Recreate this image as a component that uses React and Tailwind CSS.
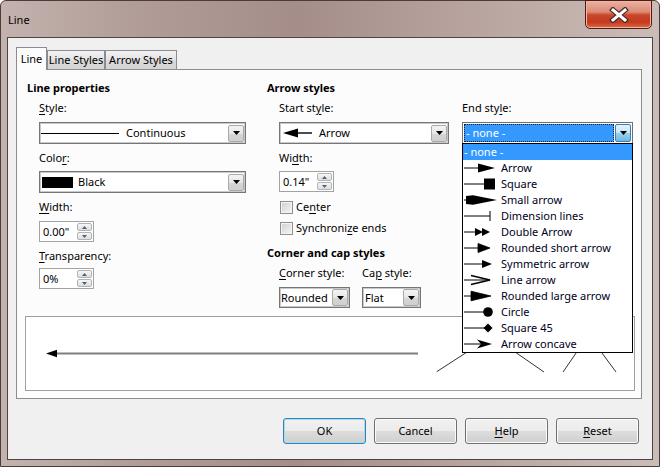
import React from 'react';

const Tri = () => (
  <svg width="7" height="4" viewBox="0 0 7 4" className="block">
    <path d="M0 0H7L3.5 4Z" fill="#000" />
  </svg>
);

function ComboBtn() {
  return (
    <div className="flex h-[17px] w-[16px] items-center justify-center rounded-[2px] border border-[#a9a9a9] bg-[linear-gradient(#f4f4f4,#e6e6e6_50%,#d6d6d6_51%,#cfcfcf)]">
      <Tri />
    </div>
  );
}

function Combo({ className, children }) {
  return (
    <div className={'flex items-center border border-[#767676] bg-white pr-[1px] shadow-[inset_0_0_0_1px_#c9c9c9] ' + className}>
      <div className="flex min-w-0 flex-1 items-center overflow-hidden">{children}</div>
      <ComboBtn />
    </div>
  );
}

function SpinBtn({ up }) {
  return (
    <div className="flex h-[8px] w-[15px] items-center justify-center rounded-[2px] border border-[#b3b3b3] bg-[linear-gradient(#f6f6f6,#dedede)]">
      <svg width="5" height="3" viewBox="0 0 5 3" className="block">
        <path d={up ? 'M0 3H5L2.5 0Z' : 'M0 0H5L2.5 3Z'} fill="#4d5e80" />
      </svg>
    </div>
  );
}

function Spin({ value, className }) {
  return (
    <div className={'flex h-[21px] w-[55px] items-center justify-between border border-[#a3a3a3] bg-white pl-[3px] pr-[1px] ' + className}>
      <span>{value}</span>
      <div className="flex flex-col gap-[1px]">
        <SpinBtn up />
        <SpinBtn />
      </div>
    </div>
  );
}

function Check({ children, className }) {
  return (
    <div className={'flex h-[16px] items-center pl-[1px] ' + className}>
      <div className="h-[13px] w-[13px] border border-[#8e8f8f] bg-[linear-gradient(135deg,#cfcfcf,#f6f6f6)] shadow-[inset_0_0_0_1px_#f4f4f4]" />
      <span className="ml-[3px]">{children}</span>
    </div>
  );
}

function U({ children }) {
  return <span className="underline decoration-1 underline-offset-[2px]">{children}</span>;
}

function Btn({ children, def }) {
  return (
    <div
      className={
        'flex h-[26px] w-[83px] items-center justify-center rounded-[3px] border bg-[linear-gradient(#f2f2f2_0%,#ebebeb_50%,#dddddd_51%,#cfcfcf_100%)] ' +
        (def ? 'border-[#3c7fb1] shadow-[inset_0_0_0_1px_#9fdcf6]' : 'border-[#707070] shadow-[inset_0_0_0_1px_#fbfbfb]')
      }
    >
      {children}
    </div>
  );
}

const L = ({ x2 }) => <line x1="1" y1="8" x2={x2} y2="8" stroke="#000" strokeWidth="1" />;

const items = [
  { t: '- none -', icon: null },
  { t: 'Arrow', icon: (<><L x2="17" /><polygon points="15,3.5 32,8 15,12.5" /></>) },
  { t: 'Square', icon: (<><L x2="22" /><rect x="21" y="2.5" width="11" height="11" /></>) },
  { t: 'Small arrow', icon: (<><L x2="8" /><polygon points="3,4 10,3.2 34,8 10,12.8 3,12" /></>) },
  { t: 'Dimension lines', icon: (<><L x2="27" /><rect x="26.5" y="3" width="1" height="10" /></>) },
  { t: 'Double Arrow', icon: (<><L x2="14" /><polygon points="12,4 20,8 12,12" /><polygon points="19,4 27,8 19,12" /></>) },
  { t: 'Rounded short arrow', icon: (<><L x2="17" /><polygon points="15,3.5 27,8 15,12.5" strokeLinejoin="round" stroke="#000" strokeWidth="0.8" /></>) },
  { t: 'Symmetric arrow', icon: (<><L x2="20" /><polygon points="19,4 29,8 19,12" /></>) },
  { t: 'Line arrow', icon: (<><L x2="26" /><polyline points="8,3.5 27,8 8,12.5" fill="none" stroke="#000" strokeWidth="1.6" /></>) },
  { t: 'Rounded large arrow', icon: (<><L x2="10" /><polygon points="8,3.2 28,8 8,12.8" strokeLinejoin="round" stroke="#000" strokeWidth="0.8" /></>) },
  { t: 'Circle', icon: (<><L x2="22" /><circle cx="25" cy="8" r="4.8" /></>) },
  { t: 'Square 45', icon: (<><L x2="22" /><polygon points="20.5,8 25,3.5 29.5,8 25,12.5" /></>) },
  { t: 'Arrow concave', icon: (<><L x2="18" /><polygon points="14,3.5 29,8 14,12.5 18,8" /></>) },
];

export default function App() {
  return (
    <div className="h-[467px] w-[660px] overflow-hidden bg-white font-['Noto_Sans',sans-serif] text-[11px] leading-[16px] text-black">
      <div className="flex h-full w-full flex-col rounded-t-[6px] border border-[#4a3c38] bg-[linear-gradient(90deg,#c3b2ae_0%,#b09b96_22%,#a58e89_45%,#b7a29d_70%,#cbbcb8_100%)]">
        {/* title bar */}
        <div className="flex h-[36px] shrink-0 items-start">
          <div className="pl-[7px] pt-[11px]">Line</div>
          <div className="ml-auto mr-[7px] mt-[-1px] flex h-[29px] w-[67px] items-center justify-center rounded-b-[5px] border border-[#4e1c14] bg-[linear-gradient(#e9b2a4_0%,#dd8b76_40%,#c9472b_52%,#c43a1f_78%,#dc6a45_100%)] shadow-[inset_0_0_0_1px_#f0b6a2]">
            <svg width="20" height="16" viewBox="0 0 20 16" className="block">
              <path d="M4 3L16 13M16 3L4 13" stroke="#4a2a26" strokeWidth="5.5" strokeLinecap="square" />
              <path d="M4 3L16 13M16 3L4 13" stroke="#ffffff" strokeWidth="3" strokeLinecap="square" />
            </svg>
          </div>
        </div>

        {/* client area */}
        <div className="ml-[6px] flex h-[423px] w-[646px] shrink-0 flex-col border border-[#4d4545] bg-[#f0f0f0] pl-[8px] pt-[9px]">
          {/* tabs */}
          <div className="flex h-[22px] items-end">
            <div className="relative z-10 mb-[-1px] flex h-[23px] w-[31px] items-start justify-center border border-b-0 border-[#898c95] bg-[#fcfcfc] pt-[3px]">
              Line
            </div>
            <div className="flex h-[19px] w-[58px] items-center justify-center border border-b-0 border-[#898c95] bg-[linear-gradient(#f2f2f2,#e4e4e4_45%,#d9d9d9_55%,#d4d4d4)]">
              Line Styles
            </div>
            <div className="flex h-[19px] w-[72px] items-center justify-center border border-b-0 border-[#898c95] bg-[linear-gradient(#f2f2f2,#e4e4e4_45%,#d9d9d9_55%,#d4d4d4)]">
              Arrow Styles
            </div>
          </div>

          {/* pane */}
          <div className="flex h-[330px] w-[626px] flex-col border border-[#898c95] bg-[#fcfcfc]">
            <div className="flex pl-[10px] pt-[10px]">
              {/* column 1 */}
              <div className="w-[240px]">
                <div className="h-[16px] font-bold">Line properties</div>
                <div className="pl-[12px]">
                  <div className="mt-[4px] h-[16px]"><U>S</U>tyle:</div>
                  <Combo className="mt-[6px] h-[22px] w-[207px]">
                    <div className="ml-[1px] h-px w-[78px] bg-black" />
                    <span className="ml-[7px]">Continuous</span>
                  </Combo>
                  <div className="mt-[6px] h-[16px]">Colo<U>r</U>:</div>
                  <Combo className="mt-[5px] h-[22px] w-[207px]">
                    <div className="ml-[2px] h-[11px] w-[31px] bg-black" />
                    <span className="ml-[5px]">Black</span>
                  </Combo>
                  <div className="mt-[6px] h-[16px]"><U>W</U>idth:</div>
                  <Spin value={'0.00"'} className="mt-[6px]" />
                  <div className="mt-[6px] h-[16px]"><U>T</U>ransparency:</div>
                  <Spin value="0%" className="mt-[4px]" />
                </div>
              </div>

              {/* column 2 */}
              <div className="flex-1">
                <div className="h-[16px] font-bold">Arrow styles</div>
                <div className="flex pl-[12px]">
                  <div className="w-[183px]">
                    <div className="mt-[4px] h-[16px]">Start st<U>y</U>le:</div>
                    <Combo className="mt-[6px] h-[22px] w-[170px]">
                      <svg width="30" height="10" viewBox="0 0 30 10" className="ml-[3px] block">
                        <polygon points="0,5 15,0.5 15,9.5" fill="#000" />
                        <rect x="14" y="4.3" width="15" height="1.4" fill="#000" />
                      </svg>
                      <span className="ml-[6px]">Arrow</span>
                    </Combo>
                    <div className="mt-[6px] h-[16px]">Wi<U>d</U>th:</div>
                    <Spin value={'0.14"'} className="mt-[5px]" />
                    <Check className="mt-[7px]">Ce<U>n</U>ter</Check>
                    <Check className="mt-[5px]">Synchroni<U>z</U>e ends</Check>
                  </div>
                  <div className="w-[171px]">
                    <div className="mt-[4px] h-[16px]">End sty<U>l</U>e:</div>
                    <div className="relative mt-[6px]">
                      <div className="flex h-[22px] w-[171px] items-center border border-[#6f6f6f] bg-white p-px">
                        <div className="flex h-full flex-1 items-center border border-dotted border-[#1b1b1b] bg-[#3399ff] text-white">
                          <span className="pl-[1px]">- none -</span>
                        </div>
                        <div className="ml-px flex h-[18px] w-[16px] items-center justify-center rounded-[2px] border border-[#3c7fb1] bg-[linear-gradient(#e5f4fc,#c4e5f6_50%,#98d1ef_51%,#6fb7de)]">
                          <Tri />
                        </div>
                      </div>
                      <div className="absolute left-0 top-[21px] z-20 h-[210px] w-[171px] border border-black bg-white">
                        {items.map((it, i) => (
                          <div
                            key={i}
                            className={'flex h-[16px] items-center ' + (i === 0 ? 'bg-[#3399ff] text-white' : 'text-[#000020]')}
                          >
                            {it.icon ? (
                              <>
                                <svg width="36" height="16" viewBox="0 0 36 16" className="block shrink-0" fill="#000">
                                  {it.icon}
                                </svg>
                                <span className="ml-[2px] whitespace-nowrap">{it.t}</span>
                              </>
                            ) : (
                              <span className="pl-[1px]">{it.t}</span>
                            )}
                          </div>
                        ))}
                      </div>
                    </div>
                  </div>
                </div>

                <div className="mt-[9px] h-[16px] font-bold">Corner and cap styles</div>
                <div className="flex pl-[12px]">
                  <div className="w-[83px]">
                    <div className="mt-[4px] h-[16px]"><U>C</U>orner style:</div>
                    <Combo className="mt-[6px] h-[21px] w-[71px]">
                      <span className="pl-[1px]">Rounded</span>
                    </Combo>
                  </div>
                  <div>
                    <div className="mt-[4px] h-[16px]">Ca<U>p</U> style:</div>
                    <Combo className="mt-[6px] h-[21px] w-[59px]">
                      <span className="pl-[2px]">Flat</span>
                    </Combo>
                  </div>
                </div>
              </div>
            </div>

            {/* preview */}
            <div className="ml-[8px] mt-[8px] h-[75px] w-[610px] border border-[#a0a0a0] bg-white">
              <svg width="608" height="73" viewBox="0 0 608 73" className="block">
                <rect x="31" y="35.5" width="361" height="2" fill="#7f7f7f" />
                <polygon points="20,36.5 31,32.8 31,40.2" fill="#000" />
                <line x1="410.7" y1="54.7" x2="454" y2="26.7" stroke="#333" strokeWidth="1" />
                <line x1="475" y1="25.3" x2="518" y2="55" stroke="#333" strokeWidth="1" />
                <line x1="537" y1="55" x2="557" y2="26" stroke="#333" strokeWidth="1" />
                <line x1="569" y1="26.5" x2="590" y2="55" stroke="#333" strokeWidth="1" />
              </svg>
            </div>
          </div>

          {/* buttons */}
          <div className="mt-[19px] flex justify-end gap-[8px] pr-[13px]">
            <Btn def>OK</Btn>
            <Btn>Cancel</Btn>
            <Btn><U>H</U>elp</Btn>
            <Btn><U>R</U>eset</Btn>
          </div>
        </div>
      </div>
    </div>
  );
}
